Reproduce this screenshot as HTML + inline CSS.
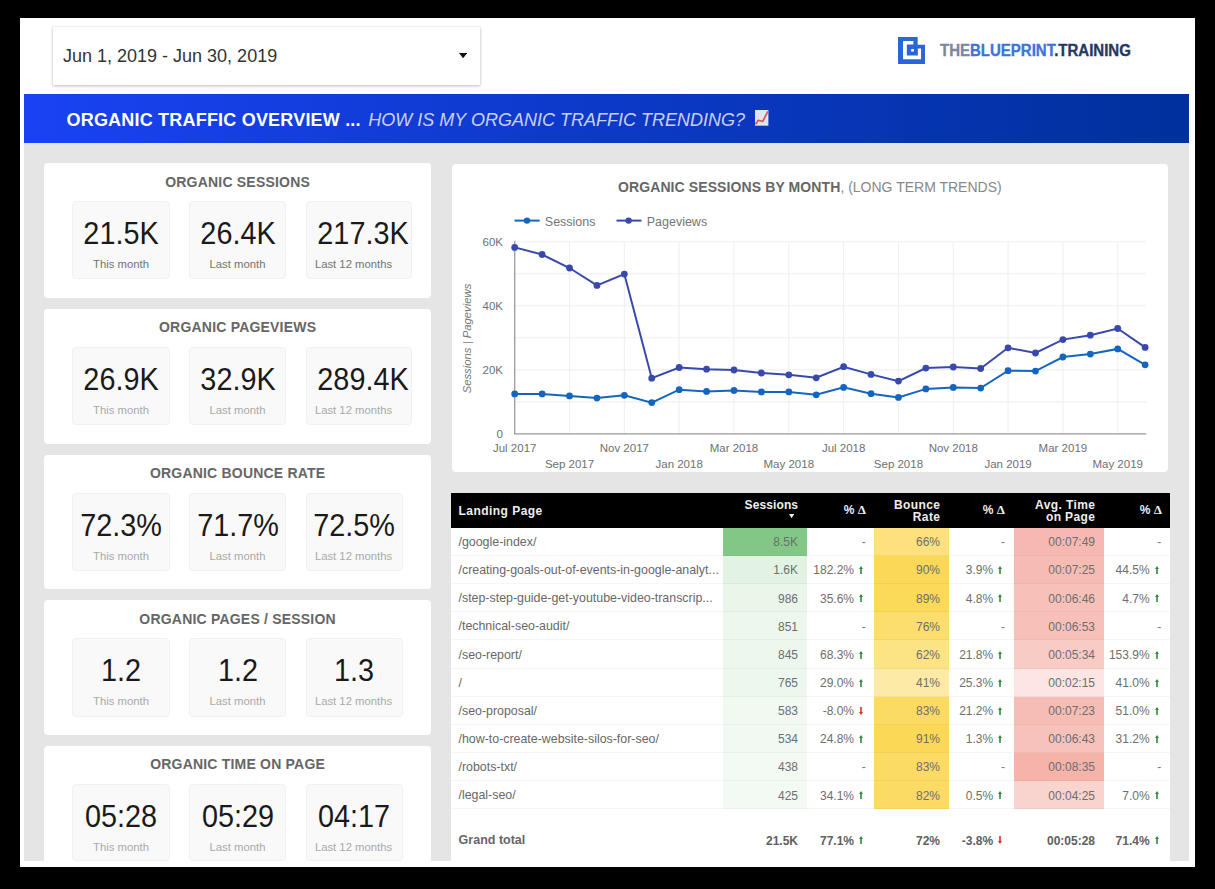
<!DOCTYPE html><html><head><meta charset="utf-8"><style>
html,body{margin:0;padding:0}
body{width:1215px;height:889px;background:#000;position:relative;overflow:hidden;font-family:"Liberation Sans", sans-serif}
.t{position:absolute;white-space:pre;font-family:"Liberation Sans", sans-serif}
</style></head><body>
<div style="position:absolute;left:20px;top:18px;width:1175px;height:849px;background:#fff"></div>
<div style="position:absolute;left:53px;top:27.4px;width:427px;height:57.199999999999996px;background:#fff;box-shadow:0 1px 3px rgba(0,0,0,.25),0 0 1px rgba(0,0,0,.15)"></div>
<div class="t" style="left:63.00px;top:46.96px;font-size:18px;line-height:18px;color:#333;font-weight:normal;font-style:normal;letter-spacing:0px;">Jun 1, 2019 - Jun 30, 2019</div>
<svg style="position:absolute;left:458.5px;top:52.6px" width="8.2" height="5.3" viewBox="0 0 8.2 5.3"><path d="M0 0H8.2L4.1 5.3Z" fill="#111"/></svg>
<svg style="position:absolute;left:898px;top:36.5px" width="27.1" height="27.1" viewBox="0 0 27 27">
<path d="M0 0H19.6V7.7H27V27H0Z" fill="#2a66d6"/>
<path d="M5 4.1H15.3V7.5H8.8V18.5H19.8V11.5H23V22.1H5Z" fill="#fff"/>
<rect x="13.1" y="12" width="2.7" height="2.5" fill="#fff"/>
</svg>
<div class="t" style="left:940.00px;top:42.66px;font-size:16px;line-height:16px;color:#000;font-weight:bold;font-style:normal;letter-spacing:0px;transform:scaleX(0.9375);transform-origin:left;-webkit-text-stroke:0.35px currentColor"><span style="color:#7c869c">THE</span><span style="color:#3b74dc">BLUEPRINT</span><span style="color:#27385f">.TRAINING</span></div>
<div style="position:absolute;left:24px;top:94px;width:1165px;height:49px;background:linear-gradient(90deg,#1a42f3,#00309c)"></div>
<div class="t" style="left:66.50px;top:111.46px;font-size:18px;line-height:18px;color:#fff;font-weight:bold;font-style:normal;letter-spacing:0.2px;">ORGANIC TRAFFIC OVERVIEW ...</div>
<div class="t" style="left:368.30px;top:111.46px;font-size:18px;line-height:18px;color:rgba(236,236,255,.86);font-weight:normal;font-style:italic;letter-spacing:0px;">HOW IS MY ORGANIC TRAFFIC TRENDING?</div>
<svg style="position:absolute;left:755.2px;top:110.3px" width="13.4" height="15.7" viewBox="0 0 13.4 15.7">
<rect x="0" y="0" width="13.4" height="15.7" fill="#dfe5ec"/>
<path d="M0.5 14.3L3.3 10.3L7.8 11.5L12.9 1.3" fill="none" stroke="#d9534f" stroke-width="1.7" stroke-linejoin="round"/>
</svg>
<div style="position:absolute;left:24px;top:143px;width:1165px;height:718px;background:#e5e5e5"></div>
<div style="position:absolute;left:44px;top:163.3px;width:387px;height:134.8px;background:#fff;border-radius:4px"></div>
<div class="t" style="left:-62.40px;width:600px;text-align:center;top:174.75px;font-size:14px;line-height:14px;color:#666;font-weight:bold;font-style:normal;letter-spacing:0.2px;">ORGANIC SESSIONS</div>
<div style="position:absolute;left:72.2px;top:201.4px;width:97.60000000000001px;height:78.1px;background:#f9f9f9;border:1px solid #f1f1f1;box-sizing:border-box;border-radius:4px"></div>
<div class="t" style="left:-179.00px;width:600px;text-align:center;top:217.21px;font-size:32px;line-height:32px;color:#1a1a1a;font-weight:normal;font-style:normal;letter-spacing:0px;transform:scaleX(0.90);transform-origin:center">21.5K</div>
<div class="t" style="left:-179.00px;width:600px;text-align:center;top:259.43px;font-size:11.3px;line-height:11.3px;color:#737373;font-weight:normal;font-style:normal;letter-spacing:0px;">This month</div>
<div style="position:absolute;left:189px;top:201.4px;width:97px;height:78.1px;background:#f9f9f9;border:1px solid #f1f1f1;box-sizing:border-box;border-radius:4px"></div>
<div class="t" style="left:-62.50px;width:600px;text-align:center;top:217.21px;font-size:32px;line-height:32px;color:#1a1a1a;font-weight:normal;font-style:normal;letter-spacing:0px;transform:scaleX(0.90);transform-origin:center">26.4K</div>
<div class="t" style="left:-62.50px;width:600px;text-align:center;top:259.43px;font-size:11.3px;line-height:11.3px;color:#737373;font-weight:normal;font-style:normal;letter-spacing:0px;">Last month</div>
<div style="position:absolute;left:305.5px;top:201.4px;width:106.5px;height:78.1px;background:#f9f9f9;border:1px solid #f1f1f1;box-sizing:border-box;border-radius:4px"></div>
<div class="t" style="left:62.50px;width:600px;text-align:center;top:217.21px;font-size:32px;line-height:32px;color:#1a1a1a;font-weight:normal;font-style:normal;letter-spacing:0px;transform:scaleX(0.90);transform-origin:center">217.3K</div>
<div class="t" style="left:53.50px;width:600px;text-align:center;top:259.43px;font-size:11.3px;line-height:11.3px;color:#737373;font-weight:normal;font-style:normal;letter-spacing:0px;">Last 12 months</div>
<div style="position:absolute;left:44px;top:308.98px;width:387px;height:134.8px;background:#fff;border-radius:4px"></div>
<div class="t" style="left:-62.40px;width:600px;text-align:center;top:320.43px;font-size:14px;line-height:14px;color:#666;font-weight:bold;font-style:normal;letter-spacing:0.2px;">ORGANIC PAGEVIEWS</div>
<div style="position:absolute;left:72.2px;top:347.08000000000004px;width:97.60000000000001px;height:78.09999999999997px;background:#f9f9f9;border:1px solid #f1f1f1;box-sizing:border-box;border-radius:4px"></div>
<div class="t" style="left:-179.00px;width:600px;text-align:center;top:362.89px;font-size:32px;line-height:32px;color:#1a1a1a;font-weight:normal;font-style:normal;letter-spacing:0px;transform:scaleX(0.90);transform-origin:center">26.9K</div>
<div class="t" style="left:-179.00px;width:600px;text-align:center;top:405.11px;font-size:11.3px;line-height:11.3px;color:#a9a9a9;font-weight:normal;font-style:normal;letter-spacing:0px;">This month</div>
<div style="position:absolute;left:189px;top:347.08000000000004px;width:97px;height:78.09999999999997px;background:#f9f9f9;border:1px solid #f1f1f1;box-sizing:border-box;border-radius:4px"></div>
<div class="t" style="left:-62.50px;width:600px;text-align:center;top:362.89px;font-size:32px;line-height:32px;color:#1a1a1a;font-weight:normal;font-style:normal;letter-spacing:0px;transform:scaleX(0.90);transform-origin:center">32.9K</div>
<div class="t" style="left:-62.50px;width:600px;text-align:center;top:405.11px;font-size:11.3px;line-height:11.3px;color:#a9a9a9;font-weight:normal;font-style:normal;letter-spacing:0px;">Last month</div>
<div style="position:absolute;left:305.5px;top:347.08000000000004px;width:106.5px;height:78.09999999999997px;background:#f9f9f9;border:1px solid #f1f1f1;box-sizing:border-box;border-radius:4px"></div>
<div class="t" style="left:62.50px;width:600px;text-align:center;top:362.89px;font-size:32px;line-height:32px;color:#1a1a1a;font-weight:normal;font-style:normal;letter-spacing:0px;transform:scaleX(0.90);transform-origin:center">289.4K</div>
<div class="t" style="left:53.50px;width:600px;text-align:center;top:405.11px;font-size:11.3px;line-height:11.3px;color:#a9a9a9;font-weight:normal;font-style:normal;letter-spacing:0px;">Last 12 months</div>
<div style="position:absolute;left:44px;top:454.66px;width:387px;height:134.8px;background:#fff;border-radius:4px"></div>
<div class="t" style="left:-62.40px;width:600px;text-align:center;top:466.11px;font-size:14px;line-height:14px;color:#666;font-weight:bold;font-style:normal;letter-spacing:0.2px;">ORGANIC BOUNCE RATE</div>
<div style="position:absolute;left:72.2px;top:492.76000000000005px;width:97.60000000000001px;height:78.09999999999997px;background:#f9f9f9;border:1px solid #f1f1f1;box-sizing:border-box;border-radius:4px"></div>
<div class="t" style="left:-179.00px;width:600px;text-align:center;top:508.57px;font-size:32px;line-height:32px;color:#1a1a1a;font-weight:normal;font-style:normal;letter-spacing:0px;transform:scaleX(0.90);transform-origin:center">72.3%</div>
<div class="t" style="left:-179.00px;width:600px;text-align:center;top:550.79px;font-size:11.3px;line-height:11.3px;color:#a9a9a9;font-weight:normal;font-style:normal;letter-spacing:0px;">This month</div>
<div style="position:absolute;left:189px;top:492.76000000000005px;width:97px;height:78.09999999999997px;background:#f9f9f9;border:1px solid #f1f1f1;box-sizing:border-box;border-radius:4px"></div>
<div class="t" style="left:-62.50px;width:600px;text-align:center;top:508.57px;font-size:32px;line-height:32px;color:#1a1a1a;font-weight:normal;font-style:normal;letter-spacing:0px;transform:scaleX(0.90);transform-origin:center">71.7%</div>
<div class="t" style="left:-62.50px;width:600px;text-align:center;top:550.79px;font-size:11.3px;line-height:11.3px;color:#a9a9a9;font-weight:normal;font-style:normal;letter-spacing:0px;">Last month</div>
<div style="position:absolute;left:305.5px;top:492.76000000000005px;width:97.19999999999999px;height:78.09999999999997px;background:#f9f9f9;border:1px solid #f1f1f1;box-sizing:border-box;border-radius:4px"></div>
<div class="t" style="left:54.10px;width:600px;text-align:center;top:508.57px;font-size:32px;line-height:32px;color:#1a1a1a;font-weight:normal;font-style:normal;letter-spacing:0px;transform:scaleX(0.90);transform-origin:center">72.5%</div>
<div class="t" style="left:53.50px;width:600px;text-align:center;top:550.79px;font-size:11.3px;line-height:11.3px;color:#a9a9a9;font-weight:normal;font-style:normal;letter-spacing:0px;">Last 12 months</div>
<div style="position:absolute;left:44px;top:600.34px;width:387px;height:134.80000000000007px;background:#fff;border-radius:4px"></div>
<div class="t" style="left:-62.40px;width:600px;text-align:center;top:611.79px;font-size:14px;line-height:14px;color:#666;font-weight:bold;font-style:normal;letter-spacing:0.2px;">ORGANIC PAGES / SESSION</div>
<div style="position:absolute;left:72.2px;top:638.44px;width:97.60000000000001px;height:78.10000000000002px;background:#f9f9f9;border:1px solid #f1f1f1;box-sizing:border-box;border-radius:4px"></div>
<div class="t" style="left:-179.00px;width:600px;text-align:center;top:654.25px;font-size:32px;line-height:32px;color:#1a1a1a;font-weight:normal;font-style:normal;letter-spacing:0px;transform:scaleX(0.90);transform-origin:center">1.2</div>
<div class="t" style="left:-179.00px;width:600px;text-align:center;top:696.47px;font-size:11.3px;line-height:11.3px;color:#a9a9a9;font-weight:normal;font-style:normal;letter-spacing:0px;">This month</div>
<div style="position:absolute;left:189px;top:638.44px;width:97px;height:78.10000000000002px;background:#f9f9f9;border:1px solid #f1f1f1;box-sizing:border-box;border-radius:4px"></div>
<div class="t" style="left:-62.50px;width:600px;text-align:center;top:654.25px;font-size:32px;line-height:32px;color:#1a1a1a;font-weight:normal;font-style:normal;letter-spacing:0px;transform:scaleX(0.90);transform-origin:center">1.2</div>
<div class="t" style="left:-62.50px;width:600px;text-align:center;top:696.47px;font-size:11.3px;line-height:11.3px;color:#a9a9a9;font-weight:normal;font-style:normal;letter-spacing:0px;">Last month</div>
<div style="position:absolute;left:305.5px;top:638.44px;width:97.19999999999999px;height:78.10000000000002px;background:#f9f9f9;border:1px solid #f1f1f1;box-sizing:border-box;border-radius:4px"></div>
<div class="t" style="left:54.10px;width:600px;text-align:center;top:654.25px;font-size:32px;line-height:32px;color:#1a1a1a;font-weight:normal;font-style:normal;letter-spacing:0px;transform:scaleX(0.90);transform-origin:center">1.3</div>
<div class="t" style="left:53.50px;width:600px;text-align:center;top:696.47px;font-size:11.3px;line-height:11.3px;color:#a9a9a9;font-weight:normal;font-style:normal;letter-spacing:0px;">Last 12 months</div>
<div style="position:absolute;left:44px;top:746.02px;width:387px;height:114.98000000000002px;background:#fff;border-radius:4px 4px 0 0"></div>
<div class="t" style="left:-62.40px;width:600px;text-align:center;top:757.47px;font-size:14px;line-height:14px;color:#666;font-weight:bold;font-style:normal;letter-spacing:0.2px;">ORGANIC TIME ON PAGE</div>
<div style="position:absolute;left:72.2px;top:784.12px;width:97.60000000000001px;height:76.88px;background:#f9f9f9;border:1px solid #f1f1f1;box-sizing:border-box;border-radius:4px"></div>
<div class="t" style="left:-179.00px;width:600px;text-align:center;top:799.93px;font-size:32px;line-height:32px;color:#1a1a1a;font-weight:normal;font-style:normal;letter-spacing:0px;transform:scaleX(0.90);transform-origin:center">05:28</div>
<div class="t" style="left:-179.00px;width:600px;text-align:center;top:842.15px;font-size:11.3px;line-height:11.3px;color:#a9a9a9;font-weight:normal;font-style:normal;letter-spacing:0px;">This month</div>
<div style="position:absolute;left:189px;top:784.12px;width:97px;height:76.88px;background:#f9f9f9;border:1px solid #f1f1f1;box-sizing:border-box;border-radius:4px"></div>
<div class="t" style="left:-62.50px;width:600px;text-align:center;top:799.93px;font-size:32px;line-height:32px;color:#1a1a1a;font-weight:normal;font-style:normal;letter-spacing:0px;transform:scaleX(0.90);transform-origin:center">05:29</div>
<div class="t" style="left:-62.50px;width:600px;text-align:center;top:842.15px;font-size:11.3px;line-height:11.3px;color:#a9a9a9;font-weight:normal;font-style:normal;letter-spacing:0px;">Last month</div>
<div style="position:absolute;left:305.5px;top:784.12px;width:97.19999999999999px;height:76.88px;background:#f9f9f9;border:1px solid #f1f1f1;box-sizing:border-box;border-radius:4px"></div>
<div class="t" style="left:54.10px;width:600px;text-align:center;top:799.93px;font-size:32px;line-height:32px;color:#1a1a1a;font-weight:normal;font-style:normal;letter-spacing:0px;transform:scaleX(0.90);transform-origin:center">04:17</div>
<div class="t" style="left:53.50px;width:600px;text-align:center;top:842.15px;font-size:11.3px;line-height:11.3px;color:#a9a9a9;font-weight:normal;font-style:normal;letter-spacing:0px;">Last 12 months</div>
<div style="position:absolute;left:452.2px;top:163.7px;width:715.8px;height:307.90000000000003px;background:#fff;border-radius:4px"></div>
<div class="t" style="left:618.00px;top:180.15px;font-size:14px;line-height:14px;color:#000;font-weight:normal;font-style:normal;letter-spacing:0px;"><span style="color:#666;font-weight:bold;letter-spacing:0.1px">ORGANIC SESSIONS BY MONTH</span><span style="color:#888">, (LONG TERM TRENDS)</span></div>
<svg style="position:absolute;left:0;top:0" width="1215" height="889" viewBox="0 0 1215 889">
<line x1="514.7" y1="401.87" x2="1146.2" y2="401.87" stroke="#f0f0f0" stroke-width="1.1"/>
<line x1="514.7" y1="369.83" x2="1146.2" y2="369.83" stroke="#f0f0f0" stroke-width="1.1"/>
<line x1="514.7" y1="337.80" x2="1146.2" y2="337.80" stroke="#f0f0f0" stroke-width="1.1"/>
<line x1="514.7" y1="305.77" x2="1146.2" y2="305.77" stroke="#f0f0f0" stroke-width="1.1"/>
<line x1="514.7" y1="273.73" x2="1146.2" y2="273.73" stroke="#f0f0f0" stroke-width="1.1"/>
<line x1="514.7" y1="241.70" x2="1146.2" y2="241.70" stroke="#f0f0f0" stroke-width="1.1"/>
<line x1="569.52" y1="241.70" x2="569.52" y2="433.90" stroke="#f0f0f0" stroke-width="1.1"/>
<line x1="624.34" y1="241.70" x2="624.34" y2="433.90" stroke="#f0f0f0" stroke-width="1.1"/>
<line x1="679.16" y1="241.70" x2="679.16" y2="433.90" stroke="#f0f0f0" stroke-width="1.1"/>
<line x1="733.98" y1="241.70" x2="733.98" y2="433.90" stroke="#f0f0f0" stroke-width="1.1"/>
<line x1="788.80" y1="241.70" x2="788.80" y2="433.90" stroke="#f0f0f0" stroke-width="1.1"/>
<line x1="843.62" y1="241.70" x2="843.62" y2="433.90" stroke="#f0f0f0" stroke-width="1.1"/>
<line x1="898.44" y1="241.70" x2="898.44" y2="433.90" stroke="#f0f0f0" stroke-width="1.1"/>
<line x1="953.26" y1="241.70" x2="953.26" y2="433.90" stroke="#f0f0f0" stroke-width="1.1"/>
<line x1="1008.08" y1="241.70" x2="1008.08" y2="433.90" stroke="#f0f0f0" stroke-width="1.1"/>
<line x1="1062.90" y1="241.70" x2="1062.90" y2="433.90" stroke="#f0f0f0" stroke-width="1.1"/>
<line x1="1117.72" y1="241.70" x2="1117.72" y2="433.90" stroke="#f0f0f0" stroke-width="1.1"/>
<path d="M514.7 240.70V433.90H1146.2" fill="none" stroke="#9a9a9a" stroke-width="1.3"/>
<polyline points="514.70,393.90 542.11,393.90 569.52,395.90 596.93,398.10 624.34,395.30 651.75,402.60 679.16,389.70 706.57,391.40 733.98,390.50 761.39,391.90 788.80,391.90 816.21,394.80 843.62,387.40 871.03,393.70 898.44,397.40 925.85,388.90 953.26,387.40 980.67,388.10 1008.08,370.70 1035.49,371.10 1062.90,357.00 1090.31,354.10 1117.72,348.90 1145.13,364.80" fill="none" stroke="#1565c0" stroke-width="2"/>
<circle cx="514.70" cy="393.90" r="3.4" fill="#1565c0"/>
<circle cx="542.11" cy="393.90" r="3.4" fill="#1565c0"/>
<circle cx="569.52" cy="395.90" r="3.4" fill="#1565c0"/>
<circle cx="596.93" cy="398.10" r="3.4" fill="#1565c0"/>
<circle cx="624.34" cy="395.30" r="3.4" fill="#1565c0"/>
<circle cx="651.75" cy="402.60" r="3.4" fill="#1565c0"/>
<circle cx="679.16" cy="389.70" r="3.4" fill="#1565c0"/>
<circle cx="706.57" cy="391.40" r="3.4" fill="#1565c0"/>
<circle cx="733.98" cy="390.50" r="3.4" fill="#1565c0"/>
<circle cx="761.39" cy="391.90" r="3.4" fill="#1565c0"/>
<circle cx="788.80" cy="391.90" r="3.4" fill="#1565c0"/>
<circle cx="816.21" cy="394.80" r="3.4" fill="#1565c0"/>
<circle cx="843.62" cy="387.40" r="3.4" fill="#1565c0"/>
<circle cx="871.03" cy="393.70" r="3.4" fill="#1565c0"/>
<circle cx="898.44" cy="397.40" r="3.4" fill="#1565c0"/>
<circle cx="925.85" cy="388.90" r="3.4" fill="#1565c0"/>
<circle cx="953.26" cy="387.40" r="3.4" fill="#1565c0"/>
<circle cx="980.67" cy="388.10" r="3.4" fill="#1565c0"/>
<circle cx="1008.08" cy="370.70" r="3.4" fill="#1565c0"/>
<circle cx="1035.49" cy="371.10" r="3.4" fill="#1565c0"/>
<circle cx="1062.90" cy="357.00" r="3.4" fill="#1565c0"/>
<circle cx="1090.31" cy="354.10" r="3.4" fill="#1565c0"/>
<circle cx="1117.72" cy="348.90" r="3.4" fill="#1565c0"/>
<circle cx="1145.13" cy="364.80" r="3.4" fill="#1565c0"/>
<polyline points="514.70,247.40 542.11,254.50 569.52,268.00 596.93,285.40 624.34,274.10 651.75,378.20 679.16,367.50 706.57,369.20 733.98,370.00 761.39,373.00 788.80,374.80 816.21,377.80 843.62,366.70 871.03,374.40 898.44,381.10 925.85,368.10 953.26,367.00 980.67,368.50 1008.08,347.80 1035.49,353.00 1062.90,339.60 1090.31,335.20 1117.72,328.50 1145.13,347.40" fill="none" stroke="#3949ab" stroke-width="2"/>
<circle cx="514.70" cy="247.40" r="3.4" fill="#3949ab"/>
<circle cx="542.11" cy="254.50" r="3.4" fill="#3949ab"/>
<circle cx="569.52" cy="268.00" r="3.4" fill="#3949ab"/>
<circle cx="596.93" cy="285.40" r="3.4" fill="#3949ab"/>
<circle cx="624.34" cy="274.10" r="3.4" fill="#3949ab"/>
<circle cx="651.75" cy="378.20" r="3.4" fill="#3949ab"/>
<circle cx="679.16" cy="367.50" r="3.4" fill="#3949ab"/>
<circle cx="706.57" cy="369.20" r="3.4" fill="#3949ab"/>
<circle cx="733.98" cy="370.00" r="3.4" fill="#3949ab"/>
<circle cx="761.39" cy="373.00" r="3.4" fill="#3949ab"/>
<circle cx="788.80" cy="374.80" r="3.4" fill="#3949ab"/>
<circle cx="816.21" cy="377.80" r="3.4" fill="#3949ab"/>
<circle cx="843.62" cy="366.70" r="3.4" fill="#3949ab"/>
<circle cx="871.03" cy="374.40" r="3.4" fill="#3949ab"/>
<circle cx="898.44" cy="381.10" r="3.4" fill="#3949ab"/>
<circle cx="925.85" cy="368.10" r="3.4" fill="#3949ab"/>
<circle cx="953.26" cy="367.00" r="3.4" fill="#3949ab"/>
<circle cx="980.67" cy="368.50" r="3.4" fill="#3949ab"/>
<circle cx="1008.08" cy="347.80" r="3.4" fill="#3949ab"/>
<circle cx="1035.49" cy="353.00" r="3.4" fill="#3949ab"/>
<circle cx="1062.90" cy="339.60" r="3.4" fill="#3949ab"/>
<circle cx="1090.31" cy="335.20" r="3.4" fill="#3949ab"/>
<circle cx="1117.72" cy="328.50" r="3.4" fill="#3949ab"/>
<circle cx="1145.13" cy="347.40" r="3.4" fill="#3949ab"/>
<line x1="514.5" y1="220.6" x2="539.6" y2="220.6" stroke="#1565c0" stroke-width="2"/><circle cx="527" cy="220.6" r="3.2" fill="#1565c0"/>
<line x1="616.5" y1="220.6" x2="641.5" y2="220.6" stroke="#3949ab" stroke-width="2"/><circle cx="628.6" cy="220.6" r="3.2" fill="#3949ab"/>
<g font-family="Liberation Sans" font-size="12.5" fill="#757575"><text x="544.8" y="226.1">Sessions</text><text x="646.7" y="226.1">Pageviews</text></g>
<g font-family="Liberation Sans" font-size="11.5" fill="#707070" text-anchor="end">
<text x="503" y="245.90">60K</text>
<text x="503" y="309.97">40K</text>
<text x="503" y="374.03">20K</text>
<text x="503" y="438.10">0</text>
</g>
<text transform="translate(471,338.5) rotate(-90)" font-family="Liberation Sans" font-style="italic" font-size="11.3" fill="#777" text-anchor="middle">Sessions  |  Pageviews</text>
<g font-family="Liberation Sans" font-size="11.5" fill="#707070" text-anchor="middle">
<text x="514.70" y="451.7">Jul 2017</text>
<text x="569.52" y="467.7">Sep 2017</text>
<text x="624.34" y="451.7">Nov 2017</text>
<text x="679.16" y="467.7">Jan 2018</text>
<text x="733.98" y="451.7">Mar 2018</text>
<text x="788.80" y="467.7">May 2018</text>
<text x="843.62" y="451.7">Jul 2018</text>
<text x="898.44" y="467.7">Sep 2018</text>
<text x="953.26" y="451.7">Nov 2018</text>
<text x="1008.08" y="467.7">Jan 2019</text>
<text x="1062.90" y="451.7">Mar 2019</text>
<text x="1117.72" y="467.7">May 2019</text>
</g>
</svg>
<div style="position:absolute;left:451px;top:492.7px;width:719px;height:368.3px;background:#fff"></div>
<div style="position:absolute;left:451px;top:492.7px;width:719px;height:35.30000000000001px;background:#000"></div>
<div style="position:absolute;left:723px;top:528px;width:83.60000000000002px;height:28px;background:#82c785"></div>
<div style="position:absolute;left:874.4px;top:528px;width:74.20000000000005px;height:28px;background:#fce17e"></div>
<div style="position:absolute;left:1013.6px;top:528px;width:90.39999999999998px;height:28px;background:#f6b9b1"></div>
<div style="position:absolute;left:451px;top:555px;width:719px;height:1px;background:rgba(0,0,0,.035)"></div>
<div class="t" style="left:458.50px;top:535.90px;font-size:12.4px;line-height:12.4px;color:#686868;font-weight:normal;font-style:normal;letter-spacing:0px;">/google-index/</div>
<div class="t" style="right:417.00px;top:536.24px;font-size:12px;line-height:12px;color:#6e6e6e;font-weight:normal;font-style:normal;letter-spacing:0px;">8.5K</div>
<div class="t" style="right:349.30px;top:536.24px;font-size:12px;line-height:12px;color:#777;font-weight:normal;font-style:normal;letter-spacing:0px;">-</div>
<div class="t" style="right:275.00px;top:536.24px;font-size:12px;line-height:12px;color:#6e6e6e;font-weight:normal;font-style:normal;letter-spacing:0px;">66%</div>
<div class="t" style="right:210.10px;top:536.24px;font-size:12px;line-height:12px;color:#777;font-weight:normal;font-style:normal;letter-spacing:0px;">-</div>
<div class="t" style="right:120.00px;top:536.24px;font-size:12px;line-height:12px;color:#6e6e6e;font-weight:normal;font-style:normal;letter-spacing:0px;">00:07:49</div>
<div class="t" style="right:53.70px;top:536.24px;font-size:12px;line-height:12px;color:#777;font-weight:normal;font-style:normal;letter-spacing:0px;">-</div>
<div style="position:absolute;left:723px;top:556px;width:83.60000000000002px;height:28px;background:#e2f2e3"></div>
<div style="position:absolute;left:874.4px;top:556px;width:74.20000000000005px;height:28px;background:#fbd858"></div>
<div style="position:absolute;left:1013.6px;top:556px;width:90.39999999999998px;height:28px;background:#f6bcb4"></div>
<div style="position:absolute;left:451px;top:583px;width:719px;height:1px;background:rgba(0,0,0,.035)"></div>
<div class="t" style="left:458.50px;top:564.05px;font-size:12.4px;line-height:12.4px;color:#686868;font-weight:normal;font-style:normal;letter-spacing:0px;">/creating-goals-out-of-events-in-google-analyt...</div>
<div class="t" style="right:417.00px;top:564.39px;font-size:12px;line-height:12px;color:#6e6e6e;font-weight:normal;font-style:normal;letter-spacing:0px;">1.6K</div>
<div class="t" style="right:361.00px;top:564.39px;font-size:12px;line-height:12px;color:#6e6e6e;font-weight:normal;font-style:normal;letter-spacing:0px;">182.2%</div>
<svg style="position:absolute;left:859.10px;top:566.05px" width="4" height="8" viewBox="0 0 4 8"><path d="M2 0L4 3H2.8V8H1.2V3H0Z" fill="#2e8b3e"/></svg>
<div class="t" style="right:275.00px;top:564.39px;font-size:12px;line-height:12px;color:#6e6e6e;font-weight:normal;font-style:normal;letter-spacing:0px;">90%</div>
<div class="t" style="right:221.80px;top:564.39px;font-size:12px;line-height:12px;color:#6e6e6e;font-weight:normal;font-style:normal;letter-spacing:0px;">3.9%</div>
<svg style="position:absolute;left:998.30px;top:566.05px" width="4" height="8" viewBox="0 0 4 8"><path d="M2 0L4 3H2.8V8H1.2V3H0Z" fill="#2e8b3e"/></svg>
<div class="t" style="right:120.00px;top:564.39px;font-size:12px;line-height:12px;color:#6e6e6e;font-weight:normal;font-style:normal;letter-spacing:0px;">00:07:25</div>
<div class="t" style="right:65.40px;top:564.39px;font-size:12px;line-height:12px;color:#6e6e6e;font-weight:normal;font-style:normal;letter-spacing:0px;">44.5%</div>
<svg style="position:absolute;left:1154.70px;top:566.05px" width="4" height="8" viewBox="0 0 4 8"><path d="M2 0L4 3H2.8V8H1.2V3H0Z" fill="#2e8b3e"/></svg>
<div style="position:absolute;left:723px;top:584px;width:83.60000000000002px;height:28px;background:#ebf6eb"></div>
<div style="position:absolute;left:874.4px;top:584px;width:74.20000000000005px;height:28px;background:#fbd959"></div>
<div style="position:absolute;left:1013.6px;top:584px;width:90.39999999999998px;height:28px;background:#f7c1ba"></div>
<div style="position:absolute;left:451px;top:611px;width:719px;height:1px;background:rgba(0,0,0,.035)"></div>
<div class="t" style="left:458.50px;top:592.20px;font-size:12.4px;line-height:12.4px;color:#686868;font-weight:normal;font-style:normal;letter-spacing:0px;">/step-step-guide-get-youtube-video-transcrip...</div>
<div class="t" style="right:417.00px;top:592.54px;font-size:12px;line-height:12px;color:#6e6e6e;font-weight:normal;font-style:normal;letter-spacing:0px;">986</div>
<div class="t" style="right:361.00px;top:592.54px;font-size:12px;line-height:12px;color:#6e6e6e;font-weight:normal;font-style:normal;letter-spacing:0px;">35.6%</div>
<svg style="position:absolute;left:859.10px;top:594.20px" width="4" height="8" viewBox="0 0 4 8"><path d="M2 0L4 3H2.8V8H1.2V3H0Z" fill="#2e8b3e"/></svg>
<div class="t" style="right:275.00px;top:592.54px;font-size:12px;line-height:12px;color:#6e6e6e;font-weight:normal;font-style:normal;letter-spacing:0px;">89%</div>
<div class="t" style="right:221.80px;top:592.54px;font-size:12px;line-height:12px;color:#6e6e6e;font-weight:normal;font-style:normal;letter-spacing:0px;">4.8%</div>
<svg style="position:absolute;left:998.30px;top:594.20px" width="4" height="8" viewBox="0 0 4 8"><path d="M2 0L4 3H2.8V8H1.2V3H0Z" fill="#2e8b3e"/></svg>
<div class="t" style="right:120.00px;top:592.54px;font-size:12px;line-height:12px;color:#6e6e6e;font-weight:normal;font-style:normal;letter-spacing:0px;">00:06:46</div>
<div class="t" style="right:65.40px;top:592.54px;font-size:12px;line-height:12px;color:#6e6e6e;font-weight:normal;font-style:normal;letter-spacing:0px;">4.7%</div>
<svg style="position:absolute;left:1154.70px;top:594.20px" width="4" height="8" viewBox="0 0 4 8"><path d="M2 0L4 3H2.8V8H1.2V3H0Z" fill="#2e8b3e"/></svg>
<div style="position:absolute;left:723px;top:612px;width:83.60000000000002px;height:28px;background:#edf7ed"></div>
<div style="position:absolute;left:874.4px;top:612px;width:74.20000000000005px;height:28px;background:#fcde6e"></div>
<div style="position:absolute;left:1013.6px;top:612px;width:90.39999999999998px;height:28px;background:#f7c1b9"></div>
<div style="position:absolute;left:451px;top:639px;width:719px;height:1px;background:rgba(0,0,0,.035)"></div>
<div class="t" style="left:458.50px;top:620.35px;font-size:12.4px;line-height:12.4px;color:#686868;font-weight:normal;font-style:normal;letter-spacing:0px;">/technical-seo-audit/</div>
<div class="t" style="right:417.00px;top:620.69px;font-size:12px;line-height:12px;color:#6e6e6e;font-weight:normal;font-style:normal;letter-spacing:0px;">851</div>
<div class="t" style="right:349.30px;top:620.69px;font-size:12px;line-height:12px;color:#777;font-weight:normal;font-style:normal;letter-spacing:0px;">-</div>
<div class="t" style="right:275.00px;top:620.69px;font-size:12px;line-height:12px;color:#6e6e6e;font-weight:normal;font-style:normal;letter-spacing:0px;">76%</div>
<div class="t" style="right:210.10px;top:620.69px;font-size:12px;line-height:12px;color:#777;font-weight:normal;font-style:normal;letter-spacing:0px;">-</div>
<div class="t" style="right:120.00px;top:620.69px;font-size:12px;line-height:12px;color:#6e6e6e;font-weight:normal;font-style:normal;letter-spacing:0px;">00:06:53</div>
<div class="t" style="right:53.70px;top:620.69px;font-size:12px;line-height:12px;color:#777;font-weight:normal;font-style:normal;letter-spacing:0px;">-</div>
<div style="position:absolute;left:723px;top:640px;width:83.60000000000002px;height:29px;background:#edf7ed"></div>
<div style="position:absolute;left:874.4px;top:640px;width:74.20000000000005px;height:29px;background:#fce384"></div>
<div style="position:absolute;left:1013.6px;top:640px;width:90.39999999999998px;height:29px;background:#f8cbc5"></div>
<div style="position:absolute;left:451px;top:668px;width:719px;height:1px;background:rgba(0,0,0,.035)"></div>
<div class="t" style="left:458.50px;top:648.50px;font-size:12.4px;line-height:12.4px;color:#686868;font-weight:normal;font-style:normal;letter-spacing:0px;">/seo-report/</div>
<div class="t" style="right:417.00px;top:648.84px;font-size:12px;line-height:12px;color:#6e6e6e;font-weight:normal;font-style:normal;letter-spacing:0px;">845</div>
<div class="t" style="right:361.00px;top:648.84px;font-size:12px;line-height:12px;color:#6e6e6e;font-weight:normal;font-style:normal;letter-spacing:0px;">68.3%</div>
<svg style="position:absolute;left:859.10px;top:650.50px" width="4" height="8" viewBox="0 0 4 8"><path d="M2 0L4 3H2.8V8H1.2V3H0Z" fill="#2e8b3e"/></svg>
<div class="t" style="right:275.00px;top:648.84px;font-size:12px;line-height:12px;color:#6e6e6e;font-weight:normal;font-style:normal;letter-spacing:0px;">62%</div>
<div class="t" style="right:221.80px;top:648.84px;font-size:12px;line-height:12px;color:#6e6e6e;font-weight:normal;font-style:normal;letter-spacing:0px;">21.8%</div>
<svg style="position:absolute;left:998.30px;top:650.50px" width="4" height="8" viewBox="0 0 4 8"><path d="M2 0L4 3H2.8V8H1.2V3H0Z" fill="#2e8b3e"/></svg>
<div class="t" style="right:120.00px;top:648.84px;font-size:12px;line-height:12px;color:#6e6e6e;font-weight:normal;font-style:normal;letter-spacing:0px;">00:05:34</div>
<div class="t" style="right:65.40px;top:648.84px;font-size:12px;line-height:12px;color:#6e6e6e;font-weight:normal;font-style:normal;letter-spacing:0px;">153.9%</div>
<svg style="position:absolute;left:1154.70px;top:650.50px" width="4" height="8" viewBox="0 0 4 8"><path d="M2 0L4 3H2.8V8H1.2V3H0Z" fill="#2e8b3e"/></svg>
<div style="position:absolute;left:723px;top:669px;width:83.60000000000002px;height:28px;background:#eef7ee"></div>
<div style="position:absolute;left:874.4px;top:669px;width:74.20000000000005px;height:28px;background:#fdeaa6"></div>
<div style="position:absolute;left:1013.6px;top:669px;width:90.39999999999998px;height:28px;background:#fce5e2"></div>
<div style="position:absolute;left:451px;top:696px;width:719px;height:1px;background:rgba(0,0,0,.035)"></div>
<div class="t" style="left:458.50px;top:676.65px;font-size:12.4px;line-height:12.4px;color:#686868;font-weight:normal;font-style:normal;letter-spacing:0px;">/</div>
<div class="t" style="right:417.00px;top:676.99px;font-size:12px;line-height:12px;color:#6e6e6e;font-weight:normal;font-style:normal;letter-spacing:0px;">765</div>
<div class="t" style="right:361.00px;top:676.99px;font-size:12px;line-height:12px;color:#6e6e6e;font-weight:normal;font-style:normal;letter-spacing:0px;">29.0%</div>
<svg style="position:absolute;left:859.10px;top:678.65px" width="4" height="8" viewBox="0 0 4 8"><path d="M2 0L4 3H2.8V8H1.2V3H0Z" fill="#2e8b3e"/></svg>
<div class="t" style="right:275.00px;top:676.99px;font-size:12px;line-height:12px;color:#6e6e6e;font-weight:normal;font-style:normal;letter-spacing:0px;">41%</div>
<div class="t" style="right:221.80px;top:676.99px;font-size:12px;line-height:12px;color:#6e6e6e;font-weight:normal;font-style:normal;letter-spacing:0px;">25.3%</div>
<svg style="position:absolute;left:998.30px;top:678.65px" width="4" height="8" viewBox="0 0 4 8"><path d="M2 0L4 3H2.8V8H1.2V3H0Z" fill="#2e8b3e"/></svg>
<div class="t" style="right:120.00px;top:676.99px;font-size:12px;line-height:12px;color:#6e6e6e;font-weight:normal;font-style:normal;letter-spacing:0px;">00:02:15</div>
<div class="t" style="right:65.40px;top:676.99px;font-size:12px;line-height:12px;color:#6e6e6e;font-weight:normal;font-style:normal;letter-spacing:0px;">41.0%</div>
<svg style="position:absolute;left:1154.70px;top:678.65px" width="4" height="8" viewBox="0 0 4 8"><path d="M2 0L4 3H2.8V8H1.2V3H0Z" fill="#2e8b3e"/></svg>
<div style="position:absolute;left:723px;top:697px;width:83.60000000000002px;height:28px;background:#f1f9f1"></div>
<div style="position:absolute;left:874.4px;top:697px;width:74.20000000000005px;height:28px;background:#fbdb63"></div>
<div style="position:absolute;left:1013.6px;top:697px;width:90.39999999999998px;height:28px;background:#f6bdb5"></div>
<div style="position:absolute;left:451px;top:724px;width:719px;height:1px;background:rgba(0,0,0,.035)"></div>
<div class="t" style="left:458.50px;top:704.80px;font-size:12.4px;line-height:12.4px;color:#686868;font-weight:normal;font-style:normal;letter-spacing:0px;">/seo-proposal/</div>
<div class="t" style="right:417.00px;top:705.14px;font-size:12px;line-height:12px;color:#6e6e6e;font-weight:normal;font-style:normal;letter-spacing:0px;">583</div>
<div class="t" style="right:361.00px;top:705.14px;font-size:12px;line-height:12px;color:#6e6e6e;font-weight:normal;font-style:normal;letter-spacing:0px;">-8.0%</div>
<svg style="position:absolute;left:859.10px;top:706.80px" width="4" height="8" viewBox="0 0 4 8"><path d="M2 8L4 5H2.8V0H1.2V5H0Z" fill="#d93025"/></svg>
<div class="t" style="right:275.00px;top:705.14px;font-size:12px;line-height:12px;color:#6e6e6e;font-weight:normal;font-style:normal;letter-spacing:0px;">83%</div>
<div class="t" style="right:221.80px;top:705.14px;font-size:12px;line-height:12px;color:#6e6e6e;font-weight:normal;font-style:normal;letter-spacing:0px;">21.2%</div>
<svg style="position:absolute;left:998.30px;top:706.80px" width="4" height="8" viewBox="0 0 4 8"><path d="M2 0L4 3H2.8V8H1.2V3H0Z" fill="#2e8b3e"/></svg>
<div class="t" style="right:120.00px;top:705.14px;font-size:12px;line-height:12px;color:#6e6e6e;font-weight:normal;font-style:normal;letter-spacing:0px;">00:07:23</div>
<div class="t" style="right:65.40px;top:705.14px;font-size:12px;line-height:12px;color:#6e6e6e;font-weight:normal;font-style:normal;letter-spacing:0px;">51.0%</div>
<svg style="position:absolute;left:1154.70px;top:706.80px" width="4" height="8" viewBox="0 0 4 8"><path d="M2 0L4 3H2.8V8H1.2V3H0Z" fill="#2e8b3e"/></svg>
<div style="position:absolute;left:723px;top:725px;width:83.60000000000002px;height:28px;background:#f1f9f2"></div>
<div style="position:absolute;left:874.4px;top:725px;width:74.20000000000005px;height:28px;background:#fbd856"></div>
<div style="position:absolute;left:1013.6px;top:725px;width:90.39999999999998px;height:28px;background:#f7c2bb"></div>
<div style="position:absolute;left:451px;top:752px;width:719px;height:1px;background:rgba(0,0,0,.035)"></div>
<div class="t" style="left:458.50px;top:732.95px;font-size:12.4px;line-height:12.4px;color:#686868;font-weight:normal;font-style:normal;letter-spacing:0px;">/how-to-create-website-silos-for-seo/</div>
<div class="t" style="right:417.00px;top:733.29px;font-size:12px;line-height:12px;color:#6e6e6e;font-weight:normal;font-style:normal;letter-spacing:0px;">534</div>
<div class="t" style="right:361.00px;top:733.29px;font-size:12px;line-height:12px;color:#6e6e6e;font-weight:normal;font-style:normal;letter-spacing:0px;">24.8%</div>
<svg style="position:absolute;left:859.10px;top:734.95px" width="4" height="8" viewBox="0 0 4 8"><path d="M2 0L4 3H2.8V8H1.2V3H0Z" fill="#2e8b3e"/></svg>
<div class="t" style="right:275.00px;top:733.29px;font-size:12px;line-height:12px;color:#6e6e6e;font-weight:normal;font-style:normal;letter-spacing:0px;">91%</div>
<div class="t" style="right:221.80px;top:733.29px;font-size:12px;line-height:12px;color:#6e6e6e;font-weight:normal;font-style:normal;letter-spacing:0px;">1.3%</div>
<svg style="position:absolute;left:998.30px;top:734.95px" width="4" height="8" viewBox="0 0 4 8"><path d="M2 0L4 3H2.8V8H1.2V3H0Z" fill="#2e8b3e"/></svg>
<div class="t" style="right:120.00px;top:733.29px;font-size:12px;line-height:12px;color:#6e6e6e;font-weight:normal;font-style:normal;letter-spacing:0px;">00:06:43</div>
<div class="t" style="right:65.40px;top:733.29px;font-size:12px;line-height:12px;color:#6e6e6e;font-weight:normal;font-style:normal;letter-spacing:0px;">31.2%</div>
<svg style="position:absolute;left:1154.70px;top:734.95px" width="4" height="8" viewBox="0 0 4 8"><path d="M2 0L4 3H2.8V8H1.2V3H0Z" fill="#2e8b3e"/></svg>
<div style="position:absolute;left:723px;top:753px;width:83.60000000000002px;height:28px;background:#f3f9f3"></div>
<div style="position:absolute;left:874.4px;top:753px;width:74.20000000000005px;height:28px;background:#fbdb63"></div>
<div style="position:absolute;left:1013.6px;top:753px;width:90.39999999999998px;height:28px;background:#f5b3aa"></div>
<div style="position:absolute;left:451px;top:780px;width:719px;height:1px;background:rgba(0,0,0,.035)"></div>
<div class="t" style="left:458.50px;top:761.10px;font-size:12.4px;line-height:12.4px;color:#686868;font-weight:normal;font-style:normal;letter-spacing:0px;">/robots-txt/</div>
<div class="t" style="right:417.00px;top:761.44px;font-size:12px;line-height:12px;color:#6e6e6e;font-weight:normal;font-style:normal;letter-spacing:0px;">438</div>
<div class="t" style="right:349.30px;top:761.44px;font-size:12px;line-height:12px;color:#777;font-weight:normal;font-style:normal;letter-spacing:0px;">-</div>
<div class="t" style="right:275.00px;top:761.44px;font-size:12px;line-height:12px;color:#6e6e6e;font-weight:normal;font-style:normal;letter-spacing:0px;">83%</div>
<div class="t" style="right:210.10px;top:761.44px;font-size:12px;line-height:12px;color:#777;font-weight:normal;font-style:normal;letter-spacing:0px;">-</div>
<div class="t" style="right:120.00px;top:761.44px;font-size:12px;line-height:12px;color:#6e6e6e;font-weight:normal;font-style:normal;letter-spacing:0px;">00:08:35</div>
<div class="t" style="right:53.70px;top:761.44px;font-size:12px;line-height:12px;color:#777;font-weight:normal;font-style:normal;letter-spacing:0px;">-</div>
<div style="position:absolute;left:723px;top:781px;width:83.60000000000002px;height:28px;background:#f3faf3"></div>
<div style="position:absolute;left:874.4px;top:781px;width:74.20000000000005px;height:28px;background:#fbdb64"></div>
<div style="position:absolute;left:1013.6px;top:781px;width:90.39999999999998px;height:28px;background:#f9d4cf"></div>
<div style="position:absolute;left:451px;top:808px;width:719px;height:1px;background:rgba(0,0,0,.035)"></div>
<div class="t" style="left:458.50px;top:789.25px;font-size:12.4px;line-height:12.4px;color:#686868;font-weight:normal;font-style:normal;letter-spacing:0px;">/legal-seo/</div>
<div class="t" style="right:417.00px;top:789.59px;font-size:12px;line-height:12px;color:#6e6e6e;font-weight:normal;font-style:normal;letter-spacing:0px;">425</div>
<div class="t" style="right:361.00px;top:789.59px;font-size:12px;line-height:12px;color:#6e6e6e;font-weight:normal;font-style:normal;letter-spacing:0px;">34.1%</div>
<svg style="position:absolute;left:859.10px;top:791.25px" width="4" height="8" viewBox="0 0 4 8"><path d="M2 0L4 3H2.8V8H1.2V3H0Z" fill="#2e8b3e"/></svg>
<div class="t" style="right:275.00px;top:789.59px;font-size:12px;line-height:12px;color:#6e6e6e;font-weight:normal;font-style:normal;letter-spacing:0px;">82%</div>
<div class="t" style="right:221.80px;top:789.59px;font-size:12px;line-height:12px;color:#6e6e6e;font-weight:normal;font-style:normal;letter-spacing:0px;">0.5%</div>
<svg style="position:absolute;left:998.30px;top:791.25px" width="4" height="8" viewBox="0 0 4 8"><path d="M2 0L4 3H2.8V8H1.2V3H0Z" fill="#2e8b3e"/></svg>
<div class="t" style="right:120.00px;top:789.59px;font-size:12px;line-height:12px;color:#6e6e6e;font-weight:normal;font-style:normal;letter-spacing:0px;">00:04:25</div>
<div class="t" style="right:65.40px;top:789.59px;font-size:12px;line-height:12px;color:#6e6e6e;font-weight:normal;font-style:normal;letter-spacing:0px;">7.0%</div>
<svg style="position:absolute;left:1154.70px;top:791.25px" width="4" height="8" viewBox="0 0 4 8"><path d="M2 0L4 3H2.8V8H1.2V3H0Z" fill="#2e8b3e"/></svg>
<div class="t" style="left:458.60px;top:504.54px;font-size:12px;line-height:12px;color:#eee;font-weight:bold;font-style:normal;letter-spacing:0.45px;">Landing Page</div>
<div class="t" style="right:416.90px;top:498.84px;font-size:12px;line-height:12px;color:#eee;font-weight:bold;font-style:normal;letter-spacing:0.1px;">Sessions</div>
<svg style="position:absolute;left:789px;top:514.4px" width="5.2" height="4.2" viewBox="0 0 5.2 4.2"><path d="M0 0H5.2L2.6 4.2Z" fill="#eee"/></svg>
<div class="t" style="right:349.20px;top:504.24px;font-size:12px;line-height:12px;color:#eee;font-weight:bold;font-style:normal;letter-spacing:0px;">% <span style="font-family:Liberation Serif;font-size:13px">Δ</span></div>
<div class="t" style="right:210.10px;top:504.24px;font-size:12px;line-height:12px;color:#eee;font-weight:bold;font-style:normal;letter-spacing:0px;">% <span style="font-family:Liberation Serif;font-size:13px">Δ</span></div>
<div class="t" style="right:53.10px;top:504.24px;font-size:12px;line-height:12px;color:#eee;font-weight:bold;font-style:normal;letter-spacing:0px;">% <span style="font-family:Liberation Serif;font-size:13px">Δ</span></div>
<div class="t" style="right:274.60px;top:498.94px;font-size:12px;line-height:12px;color:#eee;font-weight:bold;font-style:normal;letter-spacing:0.4px;">Bounce</div>
<div class="t" style="right:274.60px;top:510.64px;font-size:12px;line-height:12px;color:#eee;font-weight:bold;font-style:normal;letter-spacing:0.4px;">Rate</div>
<div class="t" style="right:119.60px;top:498.94px;font-size:12px;line-height:12px;color:#eee;font-weight:bold;font-style:normal;letter-spacing:0.4px;">Avg. Time</div>
<div class="t" style="right:119.60px;top:510.64px;font-size:12px;line-height:12px;color:#eee;font-weight:bold;font-style:normal;letter-spacing:0.4px;">on Page</div>
<div class="t" style="left:458.60px;top:834.12px;font-size:12.5px;line-height:12.5px;color:#666;font-weight:bold;font-style:normal;letter-spacing:0px;">Grand total</div>
<div class="t" style="right:417.00px;top:834.54px;font-size:12px;line-height:12px;color:#606060;font-weight:bold;font-style:normal;letter-spacing:0px;">21.5K</div>
<div class="t" style="right:361.00px;top:834.54px;font-size:12px;line-height:12px;color:#606060;font-weight:bold;font-style:normal;letter-spacing:0px;">77.1%</div>
<svg style="position:absolute;left:859.10px;top:836.20px" width="4" height="8" viewBox="0 0 4 8"><path d="M2 0L4 3H2.8V8H1.2V3H0Z" fill="#2e8b3e"/></svg>
<div class="t" style="right:275.00px;top:834.54px;font-size:12px;line-height:12px;color:#606060;font-weight:bold;font-style:normal;letter-spacing:0px;">72%</div>
<div class="t" style="right:221.80px;top:834.54px;font-size:12px;line-height:12px;color:#606060;font-weight:bold;font-style:normal;letter-spacing:0px;">-3.8%</div>
<svg style="position:absolute;left:998.30px;top:836.20px" width="4" height="8" viewBox="0 0 4 8"><path d="M2 8L4 5H2.8V0H1.2V5H0Z" fill="#d93025"/></svg>
<div class="t" style="right:120.00px;top:834.54px;font-size:12px;line-height:12px;color:#606060;font-weight:bold;font-style:normal;letter-spacing:0px;">00:05:28</div>
<div class="t" style="right:65.40px;top:834.54px;font-size:12px;line-height:12px;color:#606060;font-weight:bold;font-style:normal;letter-spacing:0px;">71.4%</div>
<svg style="position:absolute;left:1154.70px;top:836.20px" width="4" height="8" viewBox="0 0 4 8"><path d="M2 0L4 3H2.8V8H1.2V3H0Z" fill="#2e8b3e"/></svg>
</body></html>
